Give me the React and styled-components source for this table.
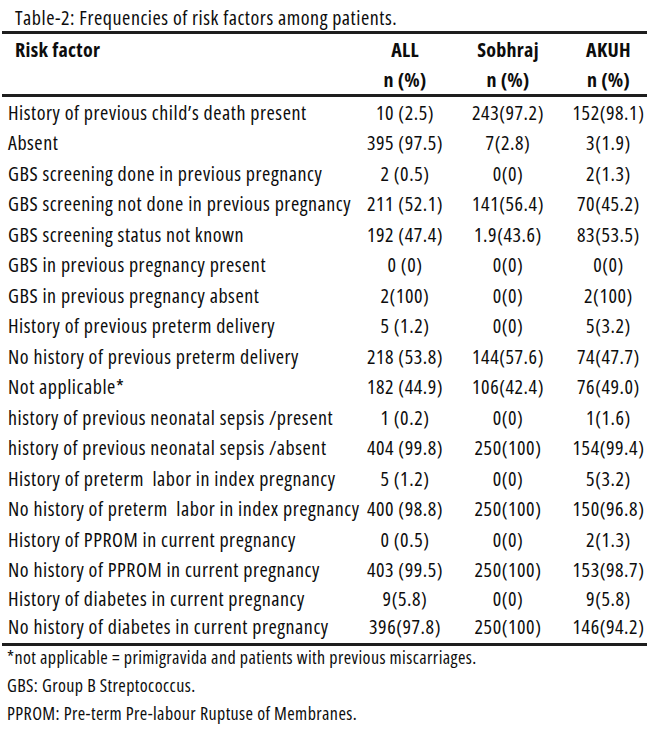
import React from 'react';
import styled, { createGlobalStyle } from 'styled-components';

const GlobalStyle = createGlobalStyle`
  body {
    margin: 0;
    background: #ffffff;
    color: #0d0d0d;
    font-family: "Open Sans", "Noto Sans", sans-serif;
    font-stretch: condensed;
  }
`;

const rows = [
  ['History of previous child\u2019s death present', '10 (2.5)', '243(97.2)', '152(98.1)'],
  ['Absent', '395 (97.5)', '7(2.8)', '3(1.9)'],
  ['GBS screening done in previous pregnancy', '2 (0.5)', '0(0)', '2(1.3)'],
  ['GBS screening not done in previous pregnancy', '211 (52.1)', '141(56.4)', '70(45.2)'],
  ['GBS screening status not known', '192 (47.4)', '1.9(43.6)', '83(53.5)'],
  ['GBS in previous pregnancy present', '0 (0)', '0(0)', '0(0)'],
  ['GBS in previous pregnancy absent', '2(100)', '0(0)', '2(100)'],
  ['History of previous preterm delivery', '5 (1.2)', '0(0)', '5(3.2)'],
  ['No history of previous preterm delivery', '218 (53.8)', '144(57.6)', '74(47.7)'],
  ['Not applicable*', '182 (44.9)', '106(42.4)', '76(49.0)'],
  ['history of previous neonatal sepsis /present', '1 (0.2)', '0(0)', '1(1.6)'],
  ['history of previous neonatal sepsis /absent', '404 (99.8)', '250(100)', '154(99.4)'],
  ['History of preterm  labor in index pregnancy', '5 (1.2)', '0(0)', '5(3.2)'],
  ['No history of preterm  labor in index pregnancy', '400 (98.8)', '250(100)', '150(96.8)'],
  ['History of PPROM in current pregnancy', '0 (0.5)', '0(0)', '2(1.3)'],
  ['No history of PPROM in current pregnancy', '403 (99.5)', '250(100)', '153(98.7)'],
  ['History of diabetes in current pregnancy', '9(5.8)', '0(0)', '9(5.8)', 24],
  ['No history of diabetes in current pregnancy', '396(97.8)', '250(100)', '146(94.2)', 34],
];

const notes = [
  '*not applicable = primigravida and patients with previous miscarriages.',
  'GBS: Group B Streptococcus.',
  'PPROM: Pre-term Pre-labour Ruptuse of Membranes.',
];

export default function App() {
  return (
    <>
      <GlobalStyle />
      <Page>
        <Caption>Table-2: Frequencies of risk factors among patients.</Caption>
        <Table>
          <Head>
            <Row $h={30}>
              <HeadLabel>Risk factor</HeadLabel>
              <HeadCell>ALL</HeadCell>
              <HeadCell>Sobhraj</HeadCell>
              <HeadCell $last>AKUH</HeadCell>
            </Row>
            <Row $h={30}>
              <HeadLabel />
              <HeadCell>n (%)</HeadCell>
              <HeadCell>n (%)</HeadCell>
              <HeadCell $last>n (%)</HeadCell>
            </Row>
          </Head>
          <Body>
            {rows.map(([label, all, sob, akuh, h]) => (
              <Row key={label} $h={h || 30.5}>
                <Label>{label}</Label>
                <Cell>{all}</Cell>
                <Cell>{sob}</Cell>
                <Cell $last>{akuh}</Cell>
              </Row>
            ))}
          </Body>
        </Table>
        <Notes>
          {notes.map((n) => (
            <Note key={n}>{n}</Note>
          ))}
        </Notes>
      </Page>
    </>
  );
}

const Page = styled.div`
  width: 645px;
  padding-left: 2px;
`;

const Caption = styled.div`
  padding: 5px 0 0 13px;
  font-size: 20px;
  line-height: 26px;
  letter-spacing: 0.55px;
  white-space: nowrap;
`;

const Table = styled.div`
  border-top: 3px solid #1e1e1e;
  border-bottom: 3px solid #1e1e1e;
`;

const Head = styled.div`
  border-bottom: 3px solid #1e1e1e;
`;

const Body = styled.div``;

const Row = styled.div`
  display: grid;
  grid-template-columns: 352px 102px 104px 87px;
  align-items: center;
  height: ${(p) => p.$h}px;
  font-size: 20px;
  letter-spacing: 0.55px;
  white-space: nowrap;
`;

const Label = styled.div`
  padding-left: 6px;
  white-space: pre;
`;

const HeadLabel = styled(Label)`
  padding-left: 13px;
  font-weight: 700;
  letter-spacing: 0.3px;
`;

const Cell = styled.div`
  text-align: center;
  padding-left: ${(p) => (p.$last ? '10px' : '0')};
`;

const HeadCell = styled(Cell)`
  font-weight: 700;
  letter-spacing: 0.3px;
`;

const Notes = styled.div`
  margin-top: -3px;
  padding-left: 5px;
`;

const Note = styled.div`
  font-size: 18px;
  line-height: 28px;
  letter-spacing: 0.4px;
  white-space: nowrap;
`;
